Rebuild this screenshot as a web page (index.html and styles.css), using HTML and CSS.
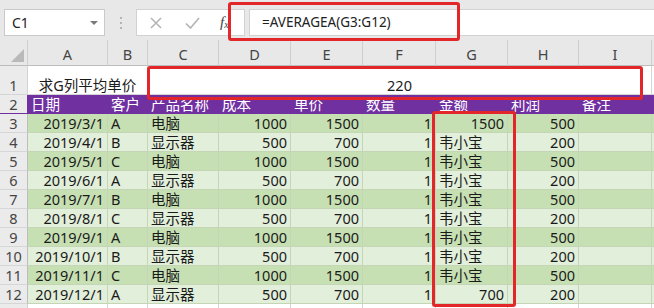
FILE: index.html
```html
<!DOCTYPE html>
<html lang="zh-CN">
<head>
    <meta charset="UTF-8">
    <title>AVERAGEA</title>
    <link rel="stylesheet" href="styles.css">
</head>
<body>
    <div class="screen">
        <div class="formula-bar">
            <div class="name-box">
                <span>C1</span>
                <span class="drop"></span>
            </div>
            <div class="grip"><i></i><i></i><i></i></div>
            <div class="func-box">
                <svg class="ico cross" width="12" height="12" viewBox="0 0 12 12"><path d="M1 1L11 11M11 1L1 11" stroke="#b5b5b5" stroke-width="1.6" fill="none"/></svg>
                <svg class="ico check" width="15" height="12" viewBox="0 0 15 12"><path d="M1 6.5L5.5 11L14 1" stroke="#b5b5b5" stroke-width="1.7" fill="none"/></svg>
                <span class="fx">f<sub>x</sub></span>
            </div>
            <div class="formula-input">=AVERAGEA(G3:G12)</div>
        </div>

        <div class="sheet">
            <div class="row head">
                <div class="corner"><span class="tri"></span></div>
                <div>A</div><div>B</div><div>C</div><div>D</div><div>E</div>
                <div>F</div><div>G</div><div>H</div><div>I</div><div></div>
            </div>
            <div class="row title">
                <div class="rh">1</div>
                <div class="span2 center">求G列平均单价</div>
                <div class="span7 center">220</div>
                <div></div>
            </div>
            <div class="row purple">
                <div class="rh">2</div>
                <div>日期</div><div>客户</div><div>产品名称</div><div>成本</div><div>单价</div>
                <div>数量</div><div>金额</div><div>利润</div><div>备注</div><div></div>
            </div>
            <div class="row dark">
                <div class="rh">3</div><div class="num">2019/3/1</div><div>A</div><div>电脑</div><div class="num">1000</div><div class="num">1500</div><div class="num">1</div><div class="num">1500</div><div class="num">500</div><div></div><div></div>
            </div>
            <div class="row light">
                <div class="rh">4</div><div class="num">2019/4/1</div><div>B</div><div>显示器</div><div class="num">500</div><div class="num">700</div><div class="num">1</div><div class="name">韦小宝</div><div class="num">200</div><div></div><div></div>
            </div>
            <div class="row dark">
                <div class="rh">5</div><div class="num">2019/5/1</div><div>C</div><div>电脑</div><div class="num">1000</div><div class="num">1500</div><div class="num">1</div><div class="name">韦小宝</div><div class="num">500</div><div></div><div></div>
            </div>
            <div class="row light">
                <div class="rh">6</div><div class="num">2019/6/1</div><div>A</div><div>显示器</div><div class="num">500</div><div class="num">700</div><div class="num">1</div><div class="name">韦小宝</div><div class="num">200</div><div></div><div></div>
            </div>
            <div class="row dark">
                <div class="rh">7</div><div class="num">2019/7/1</div><div>B</div><div>电脑</div><div class="num">1000</div><div class="num">1500</div><div class="num">1</div><div class="name">韦小宝</div><div class="num">500</div><div></div><div></div>
            </div>
            <div class="row light">
                <div class="rh">8</div><div class="num">2019/8/1</div><div>C</div><div>显示器</div><div class="num">500</div><div class="num">700</div><div class="num">1</div><div class="name">韦小宝</div><div class="num">200</div><div></div><div></div>
            </div>
            <div class="row dark">
                <div class="rh">9</div><div class="num">2019/9/1</div><div>A</div><div>电脑</div><div class="num">1000</div><div class="num">1500</div><div class="num">1</div><div class="name">韦小宝</div><div class="num">500</div><div></div><div></div>
            </div>
            <div class="row light">
                <div class="rh">10</div><div class="num">2019/10/1</div><div>B</div><div>显示器</div><div class="num">500</div><div class="num">700</div><div class="num">1</div><div class="name">韦小宝</div><div class="num">200</div><div></div><div></div>
            </div>
            <div class="row dark">
                <div class="rh">11</div><div class="num">2019/11/1</div><div>C</div><div>电脑</div><div class="num">1000</div><div class="num">1500</div><div class="num">1</div><div class="name">韦小宝</div><div class="num">500</div><div></div><div></div>
            </div>
            <div class="row light">
                <div class="rh">12</div><div class="num">2019/12/1</div><div>A</div><div>显示器</div><div class="num">500</div><div class="num">700</div><div class="num">1</div><div class="num">700</div><div class="num">200</div><div></div><div></div>
            </div>
            <div class="row blank">
                <div class="rh"></div><div></div><div></div><div></div><div></div><div></div><div></div><div></div><div></div><div></div><div></div>
            </div>
        </div>

        <!-- red highlight frames -->
        <div class="mark mark-formula"></div>
        <div class="mark mark-result"></div>
        <div class="mark mark-col"></div>
    </div>
</body>
</html>
```

FILE: styles.css
```css
body {
    margin: 0;
    padding: 0;
    background-color: #e8e8e8;
    font-family: "Noto Sans", "Noto Sans CJK SC", sans-serif;
    color: #1a1a1a;
    overflow: hidden;
}
.screen {
    position: relative;
    width: 654px;
    height: 308px;
    overflow: hidden;
}

/* Formula bar */
.formula-bar {
    display: flex;
    align-items: flex-start;
    height: 40px;
    box-sizing: border-box;
    padding: 9px 0 0 4px;
    background-color: #e8e8e8;
}
.name-box {
    display: flex;
    align-items: center;
    justify-content: space-between;
    width: 101px;
    height: 27px;
    box-sizing: border-box;
    padding: 0 6px 0 7px;
    background: white;
    border: 1px solid #cacaca;
    font-size: 14px;
    color: #222;
}
.drop {
    width: 0;
    height: 0;
    border-left: 4px solid transparent;
    border-right: 4px solid transparent;
    border-top: 4px solid #7a7a7a;
}
.grip {
    display: flex;
    flex-direction: column;
    justify-content: center;
    gap: 3px;
    width: 31px;
    height: 27px;
    align-items: center;
}
.grip i {
    display: block;
    width: 2px;
    height: 2px;
    background: #b5b5b5;
}
.func-box {
    display: flex;
    align-items: center;
    width: 109px;
    height: 27px;
    box-sizing: border-box;
    background: white;
    border: 1px solid #d2d2d2;
}
.ico.cross {
    margin-left: 13px;
}
.ico.check {
    margin-left: 23px;
}
.fx {
    margin-left: 20px;
    font-family: "Liberation Serif", serif;
    font-style: italic;
    font-size: 15px;
    color: #444;
}
.fx sub {
    font-size: 10px;
    vertical-align: -1px;
}
.formula-input {
    flex: 1;
    height: 27px;
    margin-left: 4px;
    box-sizing: border-box;
    padding-left: 12px;
    background: white;
    border: 1px solid #d2d2d2;
    border-right: none;
    font-size: 13.5px;
    line-height: 25px;
    color: #222;
}

/* Sheet grid */
.sheet {
    font-size: 14.5px;
}
.row {
    display: grid;
    grid-template-columns: 28px 80px 40px 71px 72px 72px 73px 72px 71px 73px 1fr;
    height: 19px;
}
.row > div {
    box-sizing: border-box;
    border-right: 1px solid #c4d6b6;
    border-bottom: 1px solid #c4d6b6;
    padding: 0 3px;
    line-height: 18px;
    white-space: nowrap;
    overflow: hidden;
}
.row > .rh {
    background: #ebebeb;
    color: #444;
    text-align: center;
    padding: 0;
    border-right: 1px solid #bdbdbd;
    border-bottom: 1px solid #d6d6d6;
}
.num {
    text-align: right;
}
.center {
    text-align: center;
}
.span2 {
    grid-column: span 2;
}
.span7 {
    grid-column: span 7;
}

.row.head {
    height: 26px;
    background: #e8e8e8;
}
.row.head > div {
    text-align: center;
    color: #444;
    line-height: 24px;
    padding-top: 2px;
    border-right: 1px solid #cfcfcf;
    border-bottom: 1px solid #bdbdbd;
}
.row.head > .corner {
    position: relative;
}
.tri {
    position: absolute;
    right: 3px;
    bottom: 3px;
    width: 0;
    height: 0;
    border-left: 13px solid transparent;
    border-bottom: 13px solid #b9b9b9;
}

.row.title {
    height: 29px;
    background: white;
}
.row.title > div {
    line-height: 20px;
    padding-top: 9px;
    border-right: 1px solid #d4d4d4;
    border-bottom: 1px solid #d4d4d4;
}
.row.title > .rh {
    line-height: 20px;
    padding-top: 9px;
}

.row.purple {
    background: #7030a0;
    color: white;
}
.row.purple > div {
    border-color: #7030a0;
}
.row.purple > .rh {
    color: #444;
}

.row.dark {
    background: #c6e0b4;
}
.row.light {
    background: #e2efda;
}
.row.blank {
    background: white;
}
.row.blank > div {
    border-color: #d4d4d4;
}

/* Red frames drawn over the sheet */
.mark {
    position: absolute;
    box-sizing: border-box;
    border: 3px solid #e3262a;
    border-radius: 3px;
}
.mark-formula {
    left: 228px;
    top: 2px;
    width: 232px;
    height: 39px;
}
.mark-result {
    left: 147px;
    top: 66px;
    width: 496px;
    height: 34px;
}
.mark-col {
    left: 432px;
    top: 111px;
    width: 84px;
    height: 196px;
}
```
